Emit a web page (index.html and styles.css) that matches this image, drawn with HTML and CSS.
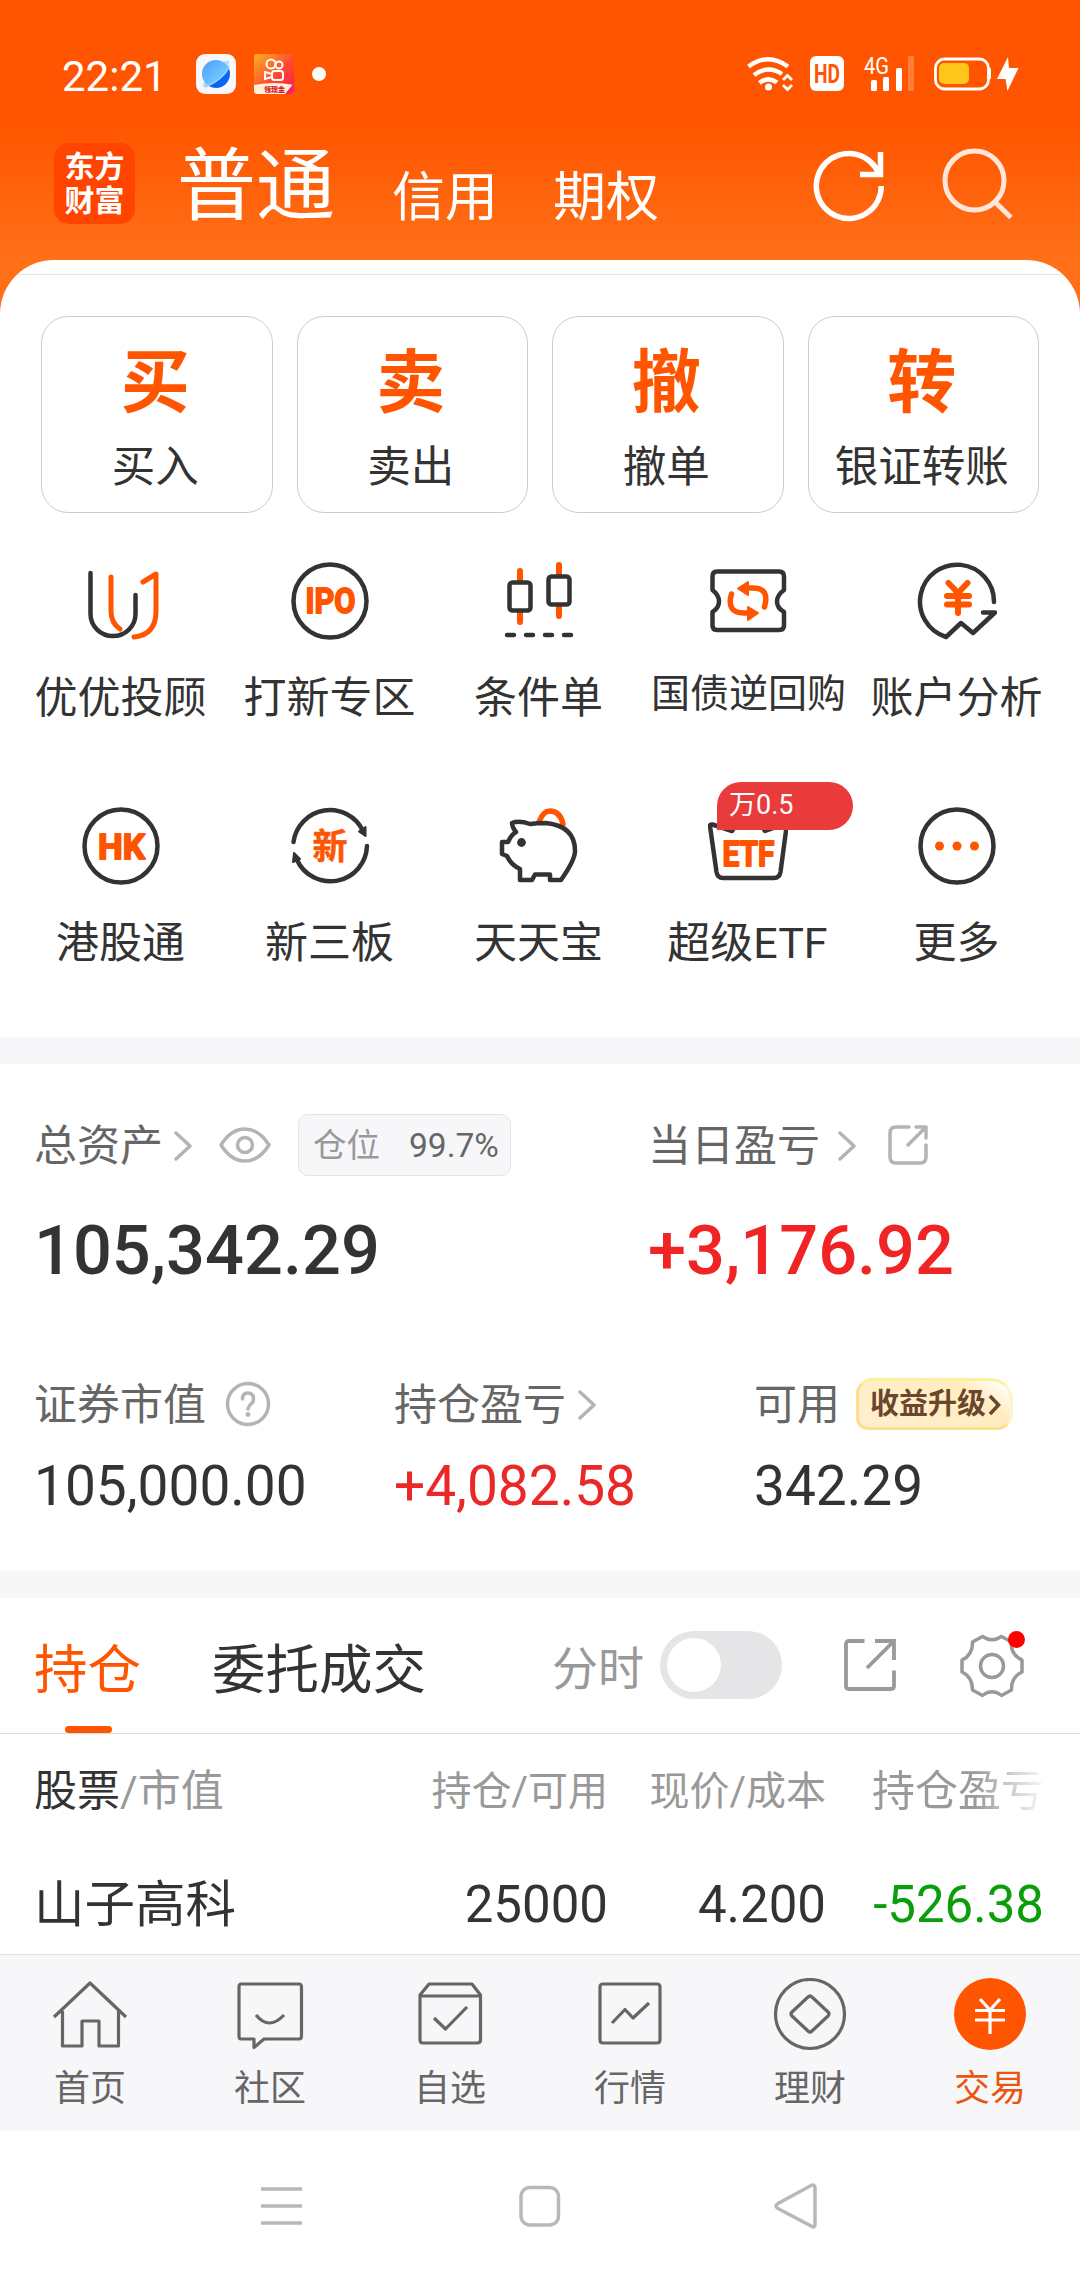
FILE: index.html
```html
<!DOCTYPE html>
<html lang="zh-CN">
<head>
<meta charset="utf-8">
<title>交易</title>
<link rel="stylesheet" href="styles.css">
</head>
<body>
<div class="screen">
  <div class="status">
    <span class="clock">22:21</span>
    <svg class="app-a" width="40" height="40" viewBox="0 0 40 40">
      <defs>
        <linearGradient id="ga" x1="0" y1="0" x2="1" y2="1"><stop offset="0" stop-color="#4a9cff"/><stop offset=".6" stop-color="#6cc4ff"/><stop offset="1" stop-color="#0a62ee"/></linearGradient>
        <linearGradient id="gb" x1="0" y1="0" x2="1" y2="1"><stop offset="0" stop-color="#ffb020"/><stop offset=".55" stop-color="#ff4a30"/><stop offset="1" stop-color="#ff1848"/></linearGradient>
      </defs>
      <rect width="40" height="40" rx="9" fill="#f8f8fa"/>
      <ellipse cx="20" cy="20" rx="18" ry="5" fill="#b4dcff" transform="rotate(-46 20 20)"/>
      <circle cx="20" cy="20" r="14" fill="url(#ga)"/>
      <path d="M13 32Q28 25 33 15A14 14 0 0 1 13 32Z" fill="#0b63f2"/>
      <path d="M9 33Q27 26 33 12" fill="none" stroke="#8fd4ff" stroke-width="1.500"/>
    </svg>
    <svg class="app-b" width="40" height="40" viewBox="0 0 40 40">
      <rect width="40" height="40" rx="3" fill="url(#gb)"/>
      <g fill="none" stroke="#fff" stroke-width="2">
        <circle cx="17" cy="10" r="4.500"/><circle cx="25" cy="11" r="3.500"/>
        <rect x="18" y="17" width="11" height="9" rx="2.500"/><path d="M18 20l-7-2v7l7-2"/>
      </g>
      <path d="M0 31Q20 27 40 31V37a3 3 0 0 1-3 3H3a3 3 0 0 1-3-3Z" fill="#fff0d8"/>
      <path d="M31 40l9-11v8a3 3 0 0 1-3 3Z" fill="#ff2060"/>
      <text x="10" y="38" font-size="7" font-weight="900" fill="#d3222a">领现金</text>
    </svg>
    <span class="dot"></span>
    <svg class="status-right" width="280" height="40" viewBox="740 54 280 40">
      <g fill="none" stroke="#fff" stroke-width="4.400">
        <path d="M748.500 66.500Q768 52 788 66.500"/><path d="M754 75Q768 64.500 782 74"/><path d="M759.500 83Q768 76 777 82.500"/>
      </g>
      <circle cx="768.500" cy="87" r="3.500" fill="#fff"/>
      <path d="M783 80l4.500-4.500L792 80M783 85l4.500 4.500L792 85" fill="none" stroke="#fff" stroke-width="2.800"/>
      <rect x="810" y="56" width="34" height="35" rx="6" fill="#fff"/>
      <text x="814" y="82.500" class="hd" textLength="26" lengthAdjust="spacingAndGlyphs">HD</text>
      <text x="864" y="73.500" class="g4" textLength="25" lengthAdjust="spacingAndGlyphs">4G</text>
      <g fill="#fff">
        <rect x="871" y="80" width="6" height="11" rx="1.500"/><rect x="883" y="77" width="6" height="14" rx="1.500"/><rect x="896" y="68" width="6" height="23" rx="1.500"/>
        <rect x="908" y="56" width="6" height="35" rx="1.500" fill="#ff7e3c"/>
        <path d="M1008 57L997 79h8.500l2 12L1018.500 68h-9.500Z"/><rect x="988" y="68" width="3" height="11" rx="1"/>
      </g>
      <rect x="935.500" y="59" width="53" height="30" rx="9" fill="none" stroke="#fff" stroke-width="2.800"/>
      <rect x="939" y="63" width="30" height="21" rx="5" fill="#ffc61a"/>
    </svg>
  </div>

  <div class="topnav">
    <div class="logo"><span>东方</span><span>财富</span></div>
    <span class="acct acct-on">普通</span>
    <span class="acct">信用</span>
    <span class="acct">期权</span>
    <svg class="ic-refresh" width="74" height="76" viewBox="812 147 74 76" fill="none" stroke="#fff" stroke-width="5.500">
      <path d="M882.300 186A32.500 32.500 0 1 1 880 174"/><path d="M881.500 152V174.500H861"/>
    </svg>
    <svg class="ic-search" width="74" height="76" viewBox="942 147 74 76" fill="none" stroke="#ffe6d8" stroke-width="5">
      <circle cx="975.500" cy="180.500" r="29.500"/><path d="M996 202l16 15.500"/>
    </svg>
  </div>

  <div class="panel">
    <div class="hair"></div>
    <div class="cards">
      <div class="card"><b>买</b><span>买入</span></div>
      <div class="card"><b>卖</b><span>卖出</span></div>
      <div class="card"><b>撤</b><span>撤单</span></div>
      <div class="card"><b>转</b><span>银证转账</span></div>
    </div>

    <div class="grid">
      <div class="cell">
        <svg viewBox="0 0 80 80"><g fill="none" stroke-width="4.500" stroke-linecap="round" stroke-linejoin="round"><path stroke="#333" d="M9.500 12V53a22.500 22 0 0 0 45 0V34"/><path stroke="#ff5500" stroke-width="5" d="M30 16V50Q30 62 39 68M53 76Q75 74 75 50V13L62 21"/></g></svg>
        <span>优优投顾</span></div>
      <div class="cell">
        <svg viewBox="0 0 80 80"><circle cx="40" cy="40" r="36.500" class="ln"/><text x="40.500" y="52" class="ict" text-anchor="middle" textLength="50" lengthAdjust="spacingAndGlyphs">IPO</text></svg>
        <span>打新专区</span></div>
      <div class="cell">
        <svg viewBox="0 0 80 80"><path d="M21 10V61M60 4V55" stroke="#ff5500" stroke-width="6" stroke-linecap="round"/><rect x="10.500" y="21.500" width="21" height="28" rx="3" class="ln wf"/><rect x="49.500" y="15.500" width="21" height="28" rx="3" class="ln wf"/><path class="ln" stroke-linecap="round" d="M8 74h7M27 74h7M46 74h7M65 74h7"/></svg>
        <span>条件单</span></div>
      <div class="cell small">
        <svg viewBox="0 0 80 80"><path class="ln" stroke-linejoin="round" d="M9 10.500H71Q76 10.500 76 15.500V29Q69 34 69 40.500T76 51V64.500Q76 69 71 69H9Q4.500 69 4.500 64.500V51Q11 47 11 40.500T4.500 29V15.500Q4.500 10.500 9 10.500Z"/><g fill="none" stroke="#ff5500" stroke-width="5.500" stroke-linecap="round"><path d="M23.500 33Q18 52 36 52H42M56.500 46Q62 27 45 27H38"/></g><path fill="#ff5500" stroke="#ff5500" stroke-width="2" stroke-linejoin="round" d="M40 21V34L30 27.500ZM40 46V59L50 52Z"/></svg>
        <span>国债逆回购</span></div>
      <div class="cell">
        <svg viewBox="0 0 80 80"><path class="ln" stroke-linecap="round" stroke-linejoin="round" d="M77 41A37 37 0 1 0 29 76L44 62 56 72 78 51.500H66"/><path fill="none" stroke="#ff5500" stroke-width="6" stroke-linecap="round" d="M31.500 22L41 32 50.500 22M41 33V52M30 35H52M30 43.500H52"/></svg>
        <span>账户分析</span></div>
      <div class="cell">
        <svg viewBox="0 0 80 80"><circle cx="40" cy="40" r="36.500" class="ln"/><text x="40.500" y="52.500" class="ict" text-anchor="middle" textLength="47" lengthAdjust="spacingAndGlyphs">HK</text></svg>
        <span>港股通</span></div>
      <div class="cell">
        <svg viewBox="0 0 80 80"><path class="ln" stroke-linecap="round" d="M3.500 36A36.700 36.700 0 0 1 73 25M77 40A36.700 36.700 0 0 1 7 54"/><path d="M75.500 21V30L69 25.500ZM4 47L10 53 3 56Z" fill="#333" stroke="#333" stroke-width="2" stroke-linejoin="round"/><text x="40" y="53" class="ict xin" text-anchor="middle">新</text></svg>
        <span>新三板</span></div>
      <div class="cell">
        <svg viewBox="0 0 80 80"><path d="M40 16Q44 5 51 5Q61 5 64 18" fill="none" stroke="#ff5500" stroke-width="5.500" stroke-linecap="round"/><path class="ln" stroke-linejoin="round" d="M13 17Q20 14 31 18Q38 17 47 17Q76 20 76 45Q76 54 62 74H51V68.500H36L33 74H21V63Q12 59 8 50L3 48V36H9Q12 29 17 26Q13 21 13 17Z"/><circle cx="22.500" cy="36.500" r="4.400" fill="#333"/></svg>
        <span>天天宝</span></div>
      <div class="cell">
        <svg viewBox="0 0 80 80"><path class="ln" stroke-linejoin="round" d="M2 20Q2 18 4.500 18.500L24 25 33 10H47L57 25 75.500 18.500Q79 18 78.500 21L72.500 66Q71.500 72 66 72H15Q9.500 72 8.500 66Z"/><text x="40.500" y="60" class="ict" text-anchor="middle" textLength="52" lengthAdjust="spacingAndGlyphs">ETF</text></svg>
        <span>超级ETF</span><em class="tag">万0.5</em></div>
      <div class="cell">
        <svg viewBox="0 0 80 80"><circle cx="40" cy="40" r="36.500" class="ln"/><g fill="#ff5500"><circle cx="22.500" cy="40" r="4.500"/><circle cx="40" cy="40" r="4.500"/><circle cx="57.500" cy="40" r="4.500"/></g></svg>
        <span>更多</span></div>
    </div>

    <div class="band"></div>

    <div class="assets">
      <div class="main-assets">
        <div class="total">
          <div class="lab"><span>总资产</span>
            <svg class="chev" width="18" height="30" viewBox="0 0 18 30"><path d="M2 2L16 15 2 28"/></svg>
            <svg class="eye" width="52" height="38" viewBox="0 0 52 38"><path d="M2 19Q12 3 26 3T50 19Q40 35 26 35T2 19Z"/><circle cx="26" cy="19" r="7.500"/></svg>
            <div class="pos"><span>仓位</span><b>99.7%</b></div>
          </div>
          <div class="big">105,342.29</div>
        </div>
        <div class="today">
          <div class="lab"><span>当日盈亏</span>
            <svg class="chev chev-b" width="18" height="30" viewBox="0 0 18 30"><path d="M2 2L16 15 2 28"/></svg>
            <svg class="share-s" width="40" height="40" viewBox="0 0 40 40"><path d="M21 2H8Q2 2 2 8V32Q2 38 8 38H32Q38 38 38 32V20M28 2H38V13M38 2L20 20"/></svg>
          </div>
          <div class="big red">+3,176.92</div>
        </div>
      </div>
      <div class="sub-assets">
        <div><div class="lab"><span>证券市值</span>
            <svg class="help" width="46" height="46" viewBox="0 0 46 46"><circle cx="23" cy="23" r="20.500"/><path d="M17.500 18Q17.500 12 23 12T28.500 18Q28.500 21 26 23T23 28"/><circle cx="23" cy="33.500" r="2.400" class="pt"/></svg></div>
          <div class="val">105,000.00</div></div>
        <div><div class="lab"><span>持仓盈亏</span>
            <svg class="chev chev-c" width="18" height="30" viewBox="0 0 18 30"><path d="M2 2L16 15 2 28"/></svg></div>
          <div class="val red2">+4,082.58</div></div>
        <div><div class="lab"><span>可用</span><div class="up"><span>收益升级</span><svg width="13" height="22" viewBox="0 0 13 22"><path class="upc" d="M2 2L10.500 11 2 20"/></svg></div></div>
          <div class="val">342.29</div></div>
      </div>
    </div>

    <div class="band"></div>

    <div class="tabs">
      <span class="tab on">持仓</span><span class="tab">委托成交</span>
      <span class="fs">分时</span><span class="toggle"><i></i></span>
      <svg class="share-l" width="52" height="54" viewBox="0 0 52 54"><path d="M20.500 3H5Q2 3 2 6V48Q2 51 5 51H47Q50 51 50 48V32.500M31 3H50V22M50 3L23 30"/></svg>
      <div class="gear"><svg width="64" height="64" viewBox="0 0 64 64"><path d="M22.500 2.500Q32 9 41.500 2.500L51.500 8Q50 20 62 26V38Q51 43 51.500 56L41.500 61.500Q32 54 22.500 61.500L12.500 56Q12.500 43 2 38V26Q13 21 12.500 8Z"/><circle cx="32" cy="32" r="11.500"/></svg><i></i></div>
    </div>

    <div class="row thead"><span class="c1"><b>股票</b>/市值</span><span class="c2">持仓/可用</span><span class="c3">现价/成本</span><span class="c4 fade">持仓盈亏</span></div>
    <div class="row stock"><span class="c1">山子高科</span><span class="c2">25000</span><span class="c3">4.200</span><span class="c4 green">-526.38</span></div>
  </div>

  <div class="bottom">
    <div class="item"><svg viewBox="0 0 76 76"><path d="M2 39L38 5 74 39M10.500 33V68H30V43H47V68H66.500V33"/></svg><span>首页</span></div>
    <div class="item"><svg viewBox="0 0 76 76"><path d="M9 6H67Q69.500 6 69.500 9V58Q69.500 61 67 61H32L22 69.500V61H9Q7 61 7 58V9Q7 6 9 6ZM24 37Q37 53 52 37"/></svg><span>社区</span></div>
    <div class="item"><svg viewBox="0 0 76 76"><path d="M17 6H60L68.500 17V62Q68.500 65 65 65H11Q8 65 8 62V17ZM8 18H68.500M22 40L33.500 51 55 29"/></svg><span>自选</span></div>
    <div class="item"><svg viewBox="0 0 76 76"><path d="M11 6H65Q68 6 68 9V62Q68 65 65 65H11Q8 65 8 62V9Q8 6 11 6ZM20 45L33 31.500 41 40 57 25"/></svg><span>行情</span></div>
    <div class="item"><svg viewBox="0 0 76 76"><circle cx="38" cy="36" r="34.500"/><path d="M36 19Q38 17 40 19L56 34Q58 36 56 38L40 53Q38 55 36 53L20 38Q18 36 20 34Z"/></svg><span>理财</span></div>
    <div class="item act"><svg viewBox="0 0 76 76"><circle cx="38" cy="36" r="36"/><path d="M28 21L38 32 48 21M38 32V56M23 32.500H53M23 42H53"/></svg><span>交易</span></div>
  </div>

  <div class="sys">
    <svg width="42" height="46" viewBox="0 0 42 46"><path d="M0 6H41M0 23H41M0 40H41"/></svg>
    <svg width="42" height="46" viewBox="0 0 42 46"><rect x="2" y="4.500" width="37.500" height="37.500" rx="9"/></svg>
    <svg width="44" height="46" viewBox="0 0 44 46"><path d="M37 2.500Q41 1 41 5V41Q41 45.500 37 43L4 25.500Q0 23 4 20.500Z"/></svg>
  </div>
</div>
</body>
</html>
```
FILE: styles.css
```css
* { box-sizing: border-box; }
body { margin: 0; background: #fff; font-family: Roboto, "Noto Sans CJK SC", sans-serif; color: #333; line-height: 1; }
svg { display: block; flex: none; }
span, b, em, i { font-style: normal; white-space: nowrap; }

.screen { width: 1080px; height: 2280px; overflow: hidden; background: linear-gradient(#ff5500 0, #ff5500 125px, #ff7018 260px, #ff7018 340px, #fff 340px); }

/* status bar */
.status { height: 120px; padding: 54px 60px 0 62px; display: flex; align-items: flex-start; }
.clock { width: 134px; height: 40px; font-size: 42px; line-height: 46px; color: #fff; letter-spacing: 0; }
.app-b { margin-left: 18px; }
.dot { width: 14px; height: 14px; margin: 13px 0 0 18px; border-radius: 50%; background: #fff; }
.status-right { margin-left: auto; }
.hd { font-size: 25px; font-weight: 700; fill: #ff5500; }
.g4 { font-size: 23px; fill: #fff; font-weight: 400; }

/* account switcher */
.topnav { height: 140px; display: flex; align-items: flex-start; padding-left: 54px; color: #fff; }
.logo { width: 81px; height: 81px; margin-top: 23px; padding-top: 7px; border-radius: 15px; background: #ff4400; display: flex; flex-direction: column; align-items: center; font-size: 30px; font-weight: 700; line-height: 34px; }
.acct { width: 107px; margin: 52px 0 0 57px; font-size: 53px; }
.acct + .acct:nth-child(4) { margin-left: 54px; }
.acct-on { width: 158px; margin: 28px 0 0 42px; font-size: 79px; }
.ic-refresh { margin: 27px 0 0 151px; }
.ic-search { margin: 27px 0 0 56px; }

/* white panel */
.panel { height: 1694px; background: #fff; border-radius: 54px 54px 0 0; overflow: hidden; }
.hair { height: 15px; border-bottom: 1px solid #e5e5e5; }
.cards { display: grid; grid-template-columns: repeat(4, 1fr); gap: 24px; padding: 41px 41px 0; }
.card { height: 197px; padding-right: 3px; border: 1px solid #ccc; border-radius: 27px; display: flex; flex-direction: column; align-items: center; }
.card b { margin-top: 32px; font-size: 69px; font-weight: 700; color: #ff5500; }
.card span { margin-top: 28px; font-size: 43.500px; }

.grid { height: 524px; padding: 48px 18px 0 16px; display: grid; grid-template-columns: repeat(5, 209px); grid-auto-rows: 245px; }
.cell { position: relative; display: flex; flex-direction: column; align-items: center; font-size: 43px; }
.cell svg { width: 80px; height: 80px; }
.cell span { margin-top: 36px; }
.cell.small span { font-size: 39px; margin-top: 34px; padding-left: 2px; }
.ln { fill: none; stroke: #333; stroke-width: 4.500px; }
.wf { fill: #fff; }
.ict { font-size: 35px; fill: #ff5500; stroke: #ff5500; stroke-width: 1.800px; stroke-linejoin: round; font-weight: 700; }
.xin { stroke-width: 0.5px; }
.tag { position: absolute; left: 74px; top: -24px; width: 136px; height: 48px; padding: 10px 0 0 12px; border-radius: 24px 24px 24px 0; background: #ea3b3c; color: #fff; font-size: 27px; }

.band { height: 27px; background: #f7f7fa; }

/* assets */
.assets { height: 507px; }
.main-assets { display: flex; height: 268px; padding-top: 50px; }
.total { width: 648px; padding-left: 34px; }
.lab { display: flex; align-items: center; height: 62px; font-size: 43px; color: #666; }
.lab > span { padding-top: 2px; }
.lab svg { fill: none; stroke: #b4b4b4; stroke-width: 3.500px; stroke-linecap: round; stroke-linejoin: round; }
.lab .chev { margin-left: 11px; margin-top: 2px; }
.lab .chev-b { margin-left: 18px; }
.lab .chev-c { margin-left: 12px; }
.eye { margin-left: 27px; }
.pos { margin-left: 27px; width: 213px; height: 62px; padding: 2px 0 0 14px; display: flex; align-items: center; border: 1px solid #e4e4e8; border-radius: 10px; background: #f7f7fa; font-size: 33.500px; color: #999; }
.pos b { margin-left: 29px; font-weight: 400; color: #666; }
.share-s { margin-left: 32px; }
.big { margin-top: 41px; font-size: 68.500px; font-weight: 500; }
.red { color: #f02424; }
.red2 { color: #ea2828; }
.sub-assets { display: grid; grid-template-columns: 360px 360px 1fr; padding: 41px 0 0 34px; }
.help { margin-left: 19px; }
.lab .help .pt { fill: #b4b4b4; stroke: none; }
.val { margin-top: 24px; font-size: 55px; }
.up { margin-left: 16px; width: 157px; height: 52px; padding: 1px 0 0 11px; display: flex; align-items: center; gap: 2px; border-radius: 16px 22px 16px 12px; border: 3px solid #fbe08e; border-top-color: #fdf09a; border-right-color: #fff3cf; background: linear-gradient(35deg, #ffefcf, #ffedc0 75%, #fff 97%); font-size: 29px; font-weight: 700; color: #6b452c; }
.lab .upc { stroke: #6b452c; stroke-width: 3.600px; stroke-linecap: butt; stroke-linejoin: miter; }

/* tabs */
.tabs { height: 136px; border-bottom: 1px solid #ddd; display: flex; align-items: flex-start; padding-left: 34px; }
.tab { height: 135px; padding-top: 46px; margin-right: 71px; font-size: 53.500px; }
.tab.on { color: #ff5500; position: relative; }
.tab.on::after { content: ""; position: absolute; left: 31px; bottom: 0; width: 47px; height: 7px; border-radius: 4px; background: #ff5500; }
.fs { margin: 48px 0 0 55px; font-size: 46px; color: #999; }
.toggle { margin: 33px 0 0 16px; width: 122px; height: 68px; padding: 7px; border-radius: 34px; background: #e5e5e7; }
.toggle i { display: block; width: 54px; height: 54px; border-radius: 50%; background: #fff; }
.share-l { margin: 40px 0 0 62px; fill: none; stroke: #999; stroke-width: 3.800px; }
.gear { position: relative; margin: 36px 0 0 64px; }
.gear svg { fill: none; stroke: #999; stroke-width: 3.500px; stroke-linejoin: round; }
.gear i { position: absolute; left: 48px; top: -3px; width: 17px; height: 17px; border-radius: 50%; background: #f00; }

/* holdings */
.row { display: grid; grid-template-columns: 301px 273px 218px 218px; padding-left: 34px; }
.c2, .c3, .c4 { text-align: right; }
.thead { height: 112px; padding-top: 36px; font-size: 43px; color: #999; }
.thead b { font-weight: 400; color: #333; }
.thead .c2, .thead .c3 { font-size: 40px; padding-top: 2px; }
.fade { -webkit-mask-image: linear-gradient(90deg, #000 68%, transparent 102%); mask-image: linear-gradient(90deg, #000 68%, transparent 102%); }
.stock { font-size: 51px; padding-top: 33px; }
.stock .c1 { font-size: 50.500px; padding-top: 1px; }
.green { color: #0a9e0a; }

/* tab bar */
.bottom { height: 177px; display: grid; grid-template-columns: repeat(6, 180px); border-top: 1px solid #e2e2e4; background: #f7f7fa; }
.item { display: flex; flex-direction: column; align-items: center; padding-top: 23px; font-size: 36px; color: #666; }
.item svg { width: 76px; height: 76px; fill: none; stroke: #666; stroke-width: 3.200px; stroke-linejoin: round; }
.item span { margin-top: 17px; }
.act { color: #e85510; }
.act circle { fill: #ff5500; stroke: none; }
.act path { stroke: #fff; }

.sys { height: 149px; display: flex; padding: 52px 0 0 261px; background: #fff; }
.sys svg { fill: none; stroke: #b8b8b8; stroke-width: 3.500px; }
.sys svg + svg { margin-left: 216px; }
.sys svg:last-child { margin-left: 213px; }
```
